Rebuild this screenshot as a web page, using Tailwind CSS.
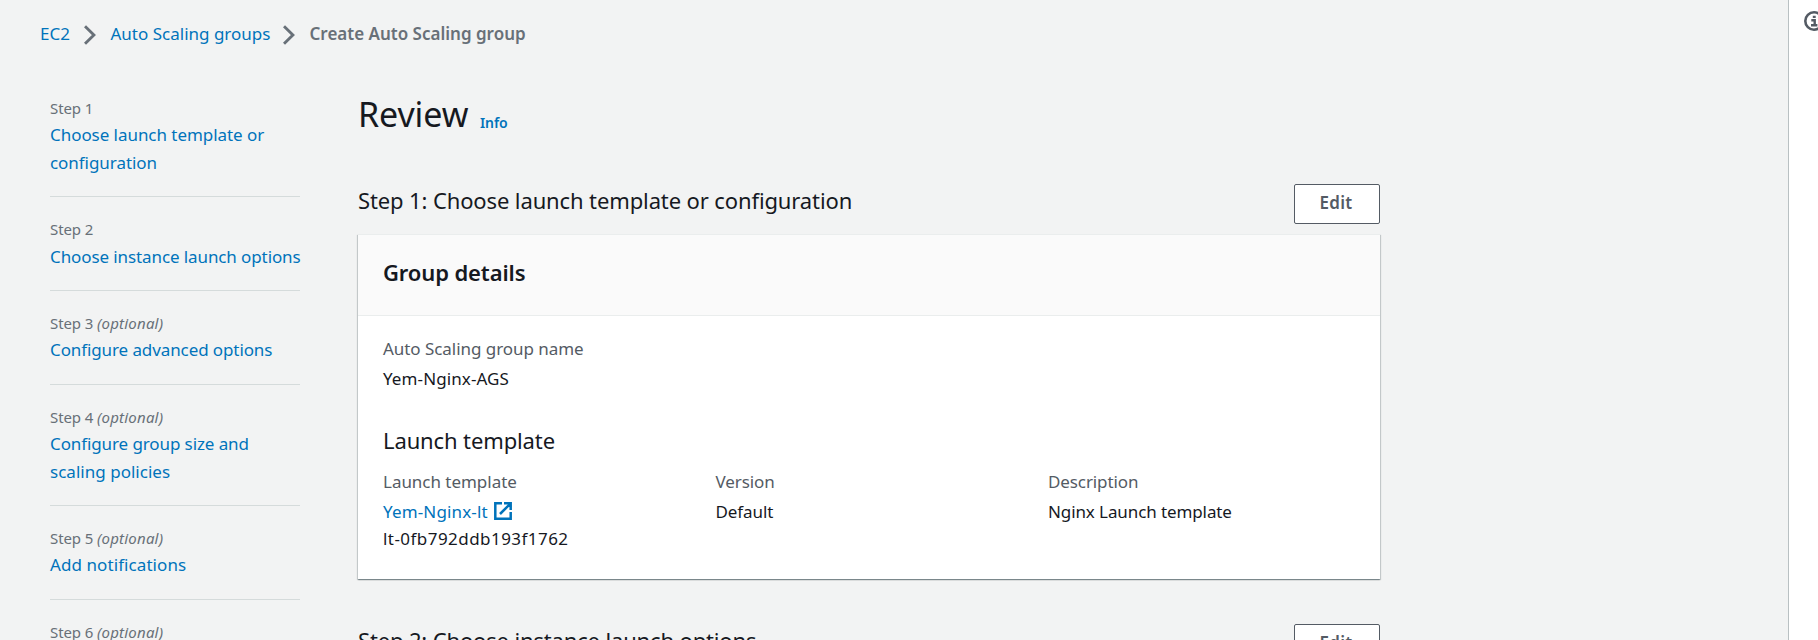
<!DOCTYPE html>
<html lang="en">
<head>
<meta charset="utf-8">
<title>Create Auto Scaling group</title>
<script src="https://cdn.jsdelivr.net/npm/@tailwindcss/browser@4"></script>
</head>
<body class="h-[640px] overflow-hidden bg-[#f2f3f3] font-['Noto_Sans',sans-serif] text-[17px] leading-6 text-[#16191f]">
<div class="flex h-[640px] w-[1818px] overflow-hidden">
  <div class="h-full w-[1788px] shrink-0 overflow-hidden">
    <nav class="flex h-[69px] items-start pt-[22px] pl-10 whitespace-nowrap">
      <a class="w-[31px] text-[#0073bb] tracking-[0.05px]">EC2</a>
      <svg class="mt-[3px] ml-[13px] h-5 w-[13px]" viewBox="0 0 13 20" fill="none" stroke="#687078" stroke-width="2.9"><path d="M1 1.2 9.9 10 1 18.8"/></svg>
      <a class="ml-[13.5px] w-[160px] text-[#0073bb]">Auto Scaling groups</a>
      <svg class="mt-[3px] ml-[12.5px] h-5 w-[13px]" viewBox="0 0 13 20" fill="none" stroke="#687078" stroke-width="2.9"><path d="M1 1.2 9.9 10 1 18.8"/></svg>
      <span class="ml-[13.5px] font-semibold text-[#687078]">Create Auto Scaling group</span>
    </nav>
    <div class="flex">
      <ul class="ml-[50px] w-[250px] shrink-0 whitespace-nowrap pt-[7px] leading-[27.5px] text-[#0073bb] tracking-[-0.1px]">
        <li class="border-b border-[#d5dbdb] pt-[22px] pb-5">
          <div class="mb-[3.25px] text-[15px] leading-5 text-[#687078]">Step 1</div>
          <div class="tracking-[-0.05px]">Choose launch template or<br>configuration</div>
        </li>
        <li class="border-b border-[#d5dbdb] pt-[22px] pb-5">
          <div class="mb-[3.25px] text-[15px] leading-5 text-[#687078]">Step 2</div>
          <div>Choose instance launch options</div>
        </li>
        <li class="border-b border-[#d5dbdb] pt-[22px] pb-5">
          <div class="mb-[3.25px] text-[15px] leading-5 text-[#687078]">Step 3 <i class="tracking-[0.2px]">(optional)</i></div>
          <div>Configure advanced options</div>
        </li>
        <li class="border-b border-[#d5dbdb] pt-[22px] pb-5">
          <div class="mb-[3.25px] text-[15px] leading-5 text-[#687078]">Step 4 <i class="tracking-[0.2px]">(optional)</i></div>
          <div>Configure group size and<br><span class="tracking-[0.02px]">scaling policies</span></div>
        </li>
        <li class="border-b border-[#d5dbdb] pt-[22px] pb-5">
          <div class="mb-[3.25px] text-[15px] leading-5 text-[#687078]">Step 5 <i class="tracking-[0.2px]">(optional)</i></div>
          <div class="tracking-[0.08px]">Add notifications</div>
        </li>
        <li class="pt-[22px]">
          <div class="text-[15px] leading-5 text-[#687078]">Step 6 <i class="tracking-[0.2px]">(optional)</i></div>
        </li>
      </ul>
      <main class="ml-[58px] w-[1022px] shrink-0 pt-[23px] whitespace-nowrap">
        <div class="flex items-baseline">
          <h1 class="w-[122px] text-[34px] leading-[44px] tracking-[-0.1px]">Review</h1>
          <a class="translate-y-px text-[14px] font-semibold text-[#0073bb] tracking-[-0.1px]">Info</a>
        </div>
        <div class="mt-12 flex h-10 items-start justify-between">
          <h2 class="pt-px text-[22px] leading-[30px] tracking-[-0.12px]">Step 1: Choose launch template or configuration</h2>
          <button class="h-10 w-[86px] rounded-[2px] border border-[#545b64] bg-white pr-[2px] pb-[3px] font-semibold text-[#545b64] tracking-[0.3px]">Edit</button>
        </div>
        <section class="mt-[10px] h-[345px] border-t border-[#eaeded] bg-white shadow-[0_1px_1px_0_rgba(0,28,36,0.3),1px_1px_1px_0_rgba(0,28,36,0.15),-1px_1px_1px_0_rgba(0,28,36,0.15)]">
          <div class="h-[81px] border-b border-[#eaeded] bg-[#fafafa] pt-[22px] pl-[25px]">
            <h3 class="text-[22px] leading-[30px] font-semibold tracking-[-0.12px]">Group details</h3>
          </div>
          <div class="pt-[21px] pl-[25px]">
            <div class="text-[#545b64] tracking-[-0.05px]">Auto Scaling group name</div>
            <div class="mt-[6px] tracking-[0.1px]">Yem-Nginx-AGS</div>
            <h4 class="mt-[34px] text-[22px] leading-[30px] tracking-[-0.12px]">Launch template</h4>
            <div class="mt-[15px] grid grid-cols-[332.5px_332.5px_1fr] tracking-[-0.1px]">
              <div>
                <div class="text-[#545b64] tracking-[-0.03px]">Launch template</div>
                <div class="mt-[6px] flex text-[#0073bb]">
                  <span class="w-[111px] tracking-[0.15px]">Yem-Nginx-lt</span>
                  <svg class="mt-[2px] size-[18px]" viewBox="0 0 18 18" fill="none" stroke="#0073bb" stroke-width="2.5"><path d="M8 1.3H1.3v15.4h15.4V10M10 1.3h6.7V8M16.2 1.8 6 12"/></svg>
                </div>
                <div class="mt-[3px] tracking-[0.45px]">lt-0fb792ddb193f1762</div>
              </div>
              <div>
                <div class="text-[#545b64]">Version</div>
                <div class="mt-[6px]">Default</div>
              </div>
              <div>
                <div class="text-[#545b64]">Description</div>
                <div class="mt-[6px]">Nginx Launch template</div>
              </div>
            </div>
          </div>
        </section>
        <div class="mt-[45px] flex h-10 items-start justify-between">
          <h2 class="pt-px text-[22px] leading-[30px] tracking-[-0.15px]">Step 2: Choose instance launch options</h2>
          <button class="h-10 w-[86px] rounded-[2px] border border-[#545b64] bg-white pr-[2px] pb-[3px] font-semibold text-[#545b64] tracking-[0.3px]">Edit</button>
        </div>
      </main>
    </div>
  </div>
  <aside class="h-full w-[30px] shrink-0 overflow-hidden border-l border-[#b9c0c2] bg-white pt-[11px] pl-[15px]">
    <svg class="h-5 w-5 max-w-none" viewBox="0 0 20 20" fill="none" stroke="#545b64" stroke-width="2.6"><circle cx="10" cy="10" r="8.7"/><path d="M7.3 9.2h3.4v4.6M7 14.2h6.4M8.8 5.9h2.9" stroke-width="2.4"/></svg>
  </aside>
</div>
</body>
</html>
